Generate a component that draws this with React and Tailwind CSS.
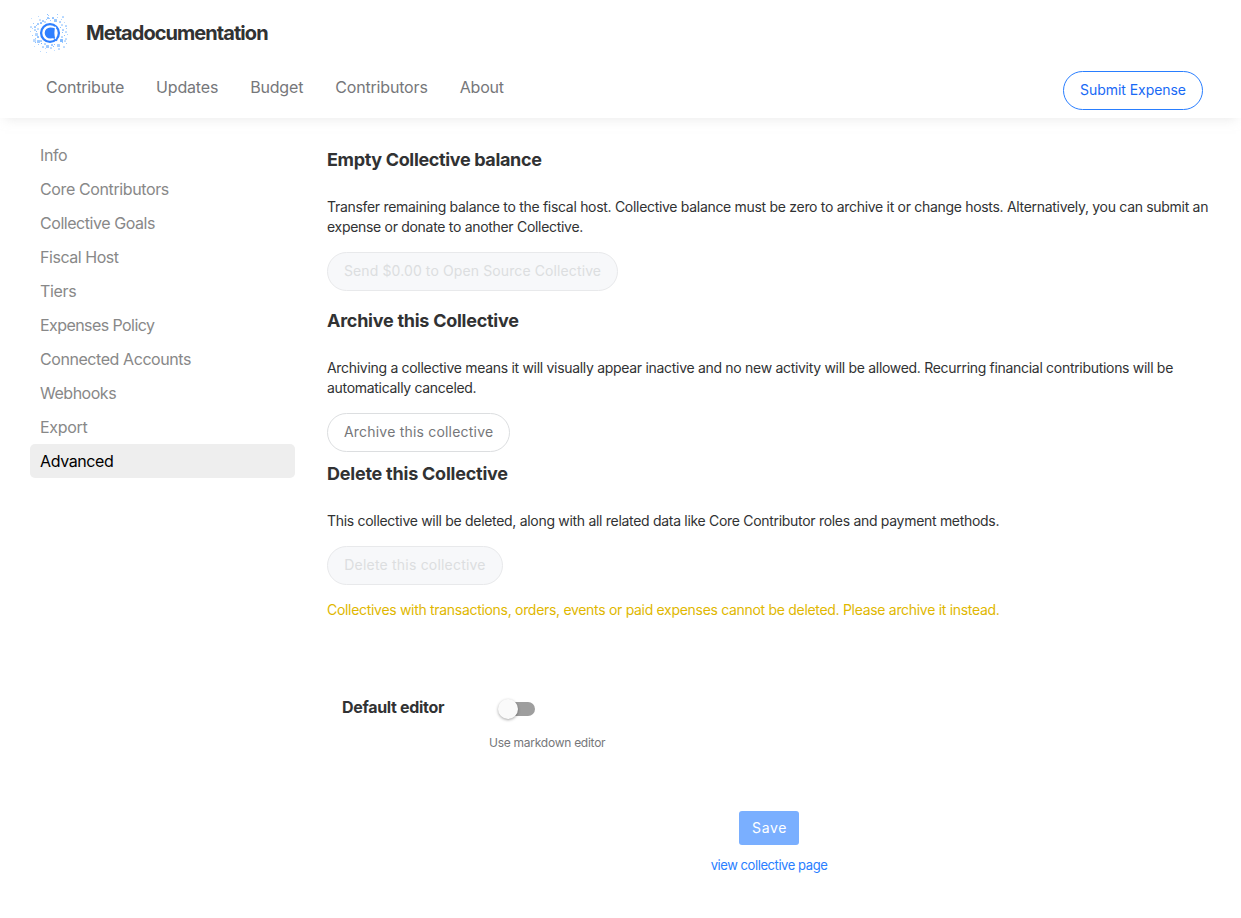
const NAV = ["Contribute", "Updates", "Budget", "Contributors", "About"];

const MENU = [
  ["Info", "tracking-[-0.4px]"],
  ["Core Contributors", "tracking-[-0.38px]"],
  ["Collective Goals", "tracking-[-0.45px]"],
  ["Fiscal Host", "tracking-[-0.45px]"],
  ["Tiers", "tracking-[-0.35px]"],
  ["Expenses Policy", "tracking-[-0.57px]"],
  ["Connected Accounts", "tracking-[-0.43px]"],
  ["Webhooks", "tracking-[-0.48px]"],
  ["Export", "tracking-[-0.3px]"],
  ["Advanced", "tracking-[-0.39px]"],
];

// [x, y, size, opacity] of each speck around the logo's ring
const SPECKS = [
  [1, 5, 1, 0.3], [8, 3, 1, 0.35], [9, 6, 2, 0.3], [17, 1, 1, 0.6], [18, 2, 1, 0.5], [17, 4, 2, 0.55], [19, 5, 1, 0.5], [16, 6, 1, 0.5], [27, 1, 1, 0.5], [32, 3, 2, 0.4],
  [22, 4, 2, 0.6], [24, 6, 3, 0.55], [27, 4, 1, 0.4], [12, 7, 2, 0.5], [14, 8, 2, 0.35], [20, 7, 1, 0.5], [10, 9, 2, 0.6], [7, 10, 2, 0.5], [3, 10, 1, 0.5], [29, 8, 2, 0.45],
  [31, 6, 1, 0.4], [34, 9, 1, 0.35], [31, 11, 2, 0.35], [35, 12, 2, 0.4], [0, 13, 2, 0.35], [4, 13, 2, 0.5], [6, 12, 1, 0.5], [7, 15, 2, 0.35], [2, 15, 1, 0.4], [4, 16, 2, 0.4],
  [0, 18, 1, 0.4], [6, 18, 1, 0.6], [5, 20, 3, 0.4], [2, 22, 1, 0.5], [7, 23, 2, 0.6], [5, 25, 1, 0.5], [3, 26, 3, 0.35], [7, 27, 3, 0.5], [5, 29, 1, 0.6], [10, 27, 2, 0.45],
  [8, 31, 1, 0.5], [11, 30, 1, 0.7], [14, 30, 2, 0.4], [12, 33, 2, 0.4], [16, 32, 3, 0.5], [15, 35, 1, 0.35], [21, 31, 2, 0.5], [20, 34, 2, 0.35], [23, 33, 1, 0.6], [24, 31, 1, 0.6],
  [27, 31, 3, 0.45], [30, 26, 3, 0.65], [32, 29, 1, 0.5], [35, 25, 2, 0.35], [34, 27, 2, 0.35], [36, 30, 1, 0.5], [31, 23, 2, 0.4], [34, 22, 1, 0.6], [37, 21, 1, 0.4], [32, 19, 1, 0.6],
  [35, 18, 2, 0.35], [32, 16, 2, 0.45], [36, 15, 1, 0.5], [30, 14, 1, 0.6], [28, 35, 2, 0.35], [33, 33, 2, 0.35], [10, 38, 1, 0.35], [16, 39, 1, 0.35], [4, 33, 1, 0.3], [24, 37, 1, 0.3],
];

function Logo() {
  return (
    <svg className="size-10" viewBox="0 0 40 40" aria-hidden="true">
      {SPECKS.map(([x, y, s, o], i) => (
        <rect key={i} x={x} y={y} width={s} height={s} rx={s > 1 ? 0.5 : 0} fill="#3d95ff" fillOpacity={o} />
      ))}
      <circle cx="20" cy="20" r="8.9" fill="#fff" stroke="#2f80ff" strokeWidth="2.3" />
      <path d="M24.8 15.2Q22.9 14.4 20.3 14.4A5.6 5.6 0 0 0 20.3 25.6Q23 25.6 24.8 24.8Q24 20 24.8 15.2Z" fill="#2f80ff" />
      <path d="M23.8 24.3L27 27.6" stroke="#2f80ff" strokeWidth="2" />
      <path d="M24.6 13.8l1.4 1.4M26 24.2l-1 1.6" stroke="#fff" strokeWidth="1.3" />
    </svg>
  );
}

function Section({ title, titleClass, text, children, className }) {
  return (
    <section className={className}>
      <h2 className={"text-[18px] leading-[26px] font-bold text-[#313233] " + titleClass}>{title}</h2>
      <p className="mt-6 text-[14px] leading-5 tracking-[-0.303px] text-[#313233]">{text}</p>
      {children}
    </section>
  );
}

function Pill({ children, className }) {
  return (
    <button className={"block h-[39px] rounded-full border px-4 pb-[2px] text-[14px] leading-[21px] whitespace-nowrap " + className}>
      {children}
    </button>
  );
}

export default function App() {
  return (
    <div className="h-[918px] overflow-hidden bg-white font-['Inter',sans-serif]">
      <header className="h-[118px] shadow-[0px_6px_10px_-5px_rgba(214,214,214,0.5)]">
        <div className="flex items-center pt-[13px] pl-[30px]">
          <Logo />
          <h1 className="ml-4 text-[20px] leading-7 font-bold tracking-[-0.95px] text-[#313233]">Metadocumentation</h1>
        </div>
        <div className="flex items-start justify-between pr-[38px] pl-[30px]">
          <nav className="flex pt-[22px]">
            {NAV.map((n) => (
              <a key={n} className="px-4 text-[16px] leading-6 tracking-[-0.175px] text-[#76777a]">{n}</a>
            ))}
          </nav>
          <Pill className="mt-[18px] w-[140px] border-[#297eff] tracking-[-0.05px] text-[#1869f5]">Submit Expense</Pill>
        </div>
      </header>
      <div className="flex pl-[30px]">
        <ul className="mt-5 w-[265px]">
          {MENU.map(([m, tracking]) => (
            <li key={m} className={"h-[34px] rounded-[5px] px-[10px] text-[16px] leading-[34px] " + tracking + (m === "Advanced" ? " bg-[#eeeeee] text-black" : " text-[#888888]")}>{m}</li>
          ))}
        </ul>
        <main className="ml-8 w-[884px] pt-[29px]">
          <Section titleClass="tracking-[-0.35px]" title="Empty Collective balance" text="Transfer remaining balance to the fiscal host. Collective balance must be zero to archive it or change hosts. Alternatively, you can submit an expense or donate to another Collective.">
            <Pill className="mt-[15px] w-[291px] border-[#e8e9eb] bg-[#f7f8fa] tracking-[0.11px] text-[#dcdee0]">Send $0.00 to Open Source Collective</Pill>
          </Section>
          <Section className="mt-[17px]" titleClass="tracking-[-0.26px]" title="Archive this Collective" text="Archiving a collective means it will visually appear inactive and no new activity will be allowed. Recurring financial contributions will be automatically canceled.">
            <Pill className="mt-[15px] w-[183px] border-[#dcdee0] tracking-[0.2px] text-[#76777a]">Archive this collective</Pill>
          </Section>
          <Section className="mt-[9px]" titleClass="tracking-[-0.23px]" title="Delete this Collective" text="This collective will be deleted, along with all related data like Core Contributor roles and payment methods.">
            <Pill className="mt-[15px] w-[176px] border-[#e8e9eb] bg-[#f7f8fa] tracking-[0.2px] text-[#dcdee0]">Delete this collective</Pill>
            <p className="mt-[15px] text-[14px] leading-5 tracking-[-0.305px] text-[#e0b700]">Collectives with transactions, orders, events or paid expenses cannot be deleted. Please archive it instead.</p>
          </Section>
          <div className="mt-[75px] flex pl-[15px]">
            <div className="w-[147px] text-[16px] leading-6 font-bold tracking-[-0.32px] text-[#313233]">Default editor</div>
            <div>
              <div className="mt-[3px] ml-[9px] flex h-[22px] w-[37px] items-center">
                <span className="z-10 size-5 shrink-0 rounded-full bg-[#fafafa] shadow-[0px_1px_3px_rgba(0,0,0,0.35)]" />
                <span className="-ml-3 h-[14px] w-[29px] rounded-full bg-[#9e9e9e]" />
              </div>
              <p className="mt-[14px] text-[12px] leading-[18px] tracking-[-0.26px] text-[#76777a]">Use markdown editor</p>
            </div>
          </div>
          <div className="mt-[59px] flex flex-col items-center">
            <button className="h-[34px] w-[60px] rounded-[3px] bg-[#7aafff] pb-px pl-px text-[14px] tracking-[0.6px] text-white">Save</button>
            <a className="mt-[10px] text-[13px] leading-5 tracking-[-0.43px] text-[#297eff]">view collective page</a>
          </div>
        </main>
      </div>
    </div>
  );
}
